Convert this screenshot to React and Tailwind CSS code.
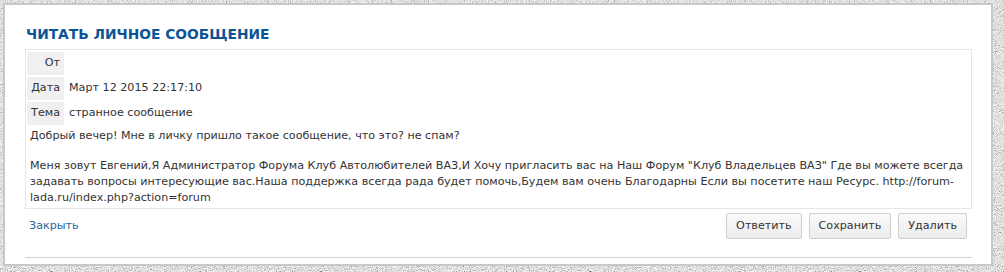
import React from "react";

const font = { fontFamily: '"DejaVu Sans", Verdana, sans-serif' };

function Noise() {
  return (
    <svg className="absolute inset-0 w-full h-full" aria-hidden="true">
      <filter id="n">
        <feTurbulence type="fractalNoise" baseFrequency="0.95" numOctaves="2" seed="3" />
        <feColorMatrix
          type="matrix"
          values="0.9 0.9 0.9 0 -0.52  0.9 0.9 0.9 0 -0.52  0.9 0.9 0.9 0 -0.52  0 0 0 0 1"
        />
      </filter>
      <rect width="100%" height="100%" fill="#828282" />
      <rect width="100%" height="100%" filter="url(#n)" opacity="0.9" />
    </svg>
  );
}

function Row({ label, children }) {
  return (
    <div className="flex h-[23px] items-center">
      <div className="w-[37px] h-full bg-[#f0f0f0] flex items-center justify-end pr-[4px] text-[#333]">
        {label}
      </div>
      <div className="pl-[5px] text-[#333]">{children}</div>
    </div>
  );
}

function Btn({ children }) {
  return (
    <button className="h-[26px] px-[9px] border border-[#cfcfcf] rounded-[2px] bg-gradient-to-b from-[#fafafa] to-[#ececec] text-[#333] text-[11.15px]">
      {children}
    </button>
  );
}

export default function App() {
  return (
    <div className="relative w-[1004px] h-[272px] overflow-hidden" style={font}>
      <Noise />
      <div className="relative ml-[3px] mt-[3px] w-[990px] h-[263px] border-2 border-[#c8c8c8] bg-white pl-[20px] pr-[19px] pt-[19px] text-[11.15px]">
        <h1 className="text-[13.8px] font-bold text-[#0b5496] leading-[20px] pl-[1px]">
          ЧИТАТЬ ЛИЧНОЕ СООБЩЕНИЕ
        </h1>
        <div className="mt-[5px] border border-[#e6e6e6] pl-[1px] pt-[2px] pb-[2px] flex flex-col">
          <div className="flex flex-col gap-[2px]">
            <Row label="От"></Row>
            <Row label="Дата">Март 12 2015 22:17:10</Row>
            <Row label="Тема">странное сообщение</Row>
          </div>
          <div className="pl-[3px] pr-[3px] pt-[3px] leading-[16px] text-[#333]">
            <p>Добрый вечер! Мне в личку пришло такое сообщение, что это? не спам?</p>
            <p className="mt-[14px]">
              Меня зовут Евгений,Я Администратор Форума Клуб Автолюбителей ВАЗ,И Хочу пригласить вас на Наш Форум "Клуб Владельцев ВАЗ" Где вы можете всегда задавать вопросы интересующие вас.Наша поддержка всегда рада будет помочь,Будем вам очень Благодарны Если вы посетите наш Ресурс. http://forum-lada.ru/index.php?action=forum
            </p>
          </div>
        </div>
        <div className="flex items-center justify-between mt-[4px] pl-[4px] pr-[5px]">
          <a className="text-[#1f6596]">Закрыть</a>
          <div className="flex gap-[7px]">
            <Btn>Ответить</Btn>
            <Btn>Сохранить</Btn>
            <Btn>Удалить</Btn>
          </div>
        </div>
        <div className="mt-[18px] h-px bg-[#d2d2d2]" />
      </div>
    </div>
  );
}
